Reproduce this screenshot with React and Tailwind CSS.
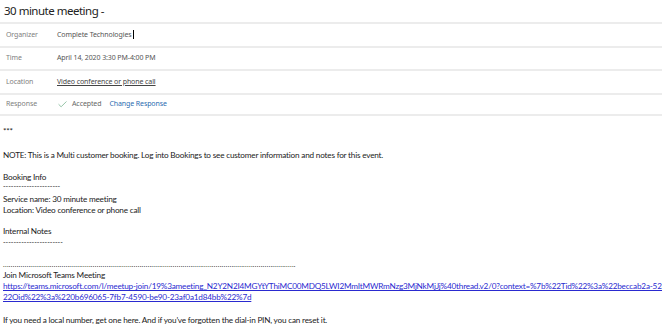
import { Check } from 'lucide-react';

const rows = [
    { label: 'Organizer', value: 'Complete Technologies' },
    { label: 'Time', value: 'April 14, 2020 3:30 PM-4:00 PM' },
    { label: 'Location', value: 'Video conference or phone call', underline: true },
];

const dots = '.'.repeat(150);

export default function App() {
    return (
        <div className="w-[662px] h-[331px] overflow-hidden bg-white text-[#333]">
            {/* Header */}
            <div className="h-[22px] flex items-center pl-[4px] font-['Noto_Sans',sans-serif] text-[11.5px] tracking-[-0.5px] text-[#222]">
                30 minute meeting -
            </div>

            <div className="font-['Noto_Sans',sans-serif] text-[7px] tracking-[-0.1px]">
                {rows.map(r => (
                    <div key={r.label} className="h-[23.5px] flex items-center border-t-2 border-[#ececec]">
                        <span className="w-[57px] pl-[6px] text-[#808080]">{r.label}</span>
                        <span className={r.underline ? 'underline text-[#444]' : 'text-[#555]'}>
                            {r.value}
                            {r.label === 'Organizer' && <span className="inline-block w-px h-[9px] bg-black align-middle ml-px" />}
                        </span>
                    </div>
                ))}
                <div className="h-[23.5px] flex items-center border-t-2 border-b-2 border-[#ececec]">
                    <span className="w-[57px] pl-[6px] text-[#808080]">Response</span>
                    <Check size={11} strokeWidth={1.3} className="text-[#4a9a6a] mr-[4px]" />
                    <span className="text-[#666] mr-[8px]">Accepted</span>
                    <span className="text-[#2b6cb0]">Change Response</span>
                </div>
            </div>

            {/* Body */}
            <div className="pl-[3px] pt-[10px] font-['Lato',sans-serif] text-[8.2px] tracking-[-0.2px] leading-[11px] text-[#222]">
                <p>***</p>
                <p className="mt-[13px]">NOTE: This is a Multi customer booking. Log into Bookings to see customer information and notes for this event.</p>
                <p className="mt-[11px]">Booking Info</p>
                <p className="leading-[7px] text-[7px] tracking-normal">----------------------</p>
                <p className="mt-[4px]">Service name: 30 minute meeting</p>
                <p>Location: Video conference or phone call</p>
                <p className="mt-[10px]">Internal Notes</p>
                <p className="mt-[1px] leading-[8px] text-[7px] tracking-normal">-----------------------</p>
                <p className="mt-[14px] leading-[8px] text-[7px] tracking-[0.3px]">{dots}</p>
                <p className="mt-[2px]">Join Microsoft Teams Meeting</p>
                <p className="whitespace-nowrap text-[#2a2ad0] underline">https://teams.microsoft.com/l/meetup-join/19%3ameeting_N2Y2N2I4MGYtYThiMC00MDQ5LWI2MmItMWRmNzg3MjNkMjJj%40thread.v2/0?context=%7b%22Tid%22%3a%22beccab2a-5268-4b5e-a8c2</p>
                <p className="whitespace-nowrap text-[#2a2ad0] underline">22Oid%22%3a%220b696065-7fb7-4590-be90-23af0a1d84bb%22%7d</p>
                <p className="mt-[12px]">If you need a local number, get one here. And if you've forgotten the dial-in PIN, you can reset it.</p>
            </div>
        </div>
    );
}
